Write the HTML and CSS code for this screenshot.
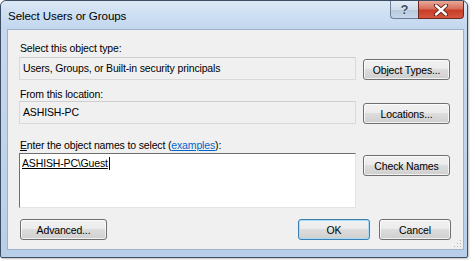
FILE: index.html
```html
<!DOCTYPE html>
<html>
<head>
<meta charset="utf-8">
<link rel="stylesheet" href="styles.css">
</head>
<body>
<div class="window">
  <div class="titlebar">
    <span class="title">Select Users or Groups</span>
    <div class="caption">
      <div class="cap help">?</div>
      <div class="cap close">
        <svg width="16" height="12" viewBox="0 0 16 12">
          <path d="M3 1.5 L13 10.5 M13 1.5 L3 10.5" stroke="#5a1c14" stroke-width="4.2" stroke-linecap="round"/>
          <path d="M3 1.5 L13 10.5 M13 1.5 L3 10.5" stroke="#ffffff" stroke-width="2.4" stroke-linecap="round"/>
        </svg>
      </div>
    </div>
  </div>
  <div class="client">
    <div class="group g1">
      <div class="label">Select this object type:</div>
      <div class="row">
        <div class="field">Users, Groups, or Built-in security principals</div>
        <div class="btn side">Object Types...</div>
      </div>
    </div>
    <div class="group g2">
      <div class="label">From this location:</div>
      <div class="row">
        <div class="field">ASHISH-PC</div>
        <div class="btn side">Locations...</div>
      </div>
    </div>
    <div class="group g3">
      <div class="label"><u>E</u>nter the object names to select (<a class="link">examples</a>):</div>
      <div class="row">
        <div class="textarea"><span class="resolved">ASHISH-PC\Guest</span><span class="caret"></span></div>
        <div class="btn side">Check Names</div>
      </div>
    </div>
    <div class="bottom">
      <div class="btn adv">Advanced...</div>
      <div class="spacer"></div>
      <div class="btn ok">OK</div>
      <div class="btn cancel">Cancel</div>
    </div>
    <svg class="grip" width="9" height="9" viewBox="0 0 9 9">
      <rect x="7" y="1" width="1" height="1" fill="#b8b8b8"/>
      <rect x="4" y="4" width="1" height="1" fill="#b8b8b8"/>
      <rect x="7" y="4" width="1" height="1" fill="#b8b8b8"/>
      <rect x="1" y="7" width="1" height="1" fill="#b8b8b8"/>
      <rect x="4" y="7" width="1" height="1" fill="#b8b8b8"/>
      <rect x="7" y="7" width="1" height="1" fill="#b8b8b8"/>
    </svg>
  </div>
</div>
</body>
</html>
```
FILE: styles.css
```css
html, body {
  margin: 0;
  padding: 0;
  background: #ffffff;
}
body {
  font-family: "Liberation Sans", Arial, sans-serif;
  font-size: 10.5px;
  letter-spacing: -0.15px;
  color: #000;
  width: 475px;
  height: 261px;
  overflow: hidden;
}
.window {
  width: 466px;
  height: 256px;
  border: 1px solid #3d4e64;
  border-radius: 6px 6px 2px 2px;
  background: linear-gradient(180deg, #d6e4f4 0%, #c6d8ee 12%, #bfd3eb 60%, #b9cfe9 100%);
  display: flex;
  flex-direction: column;
  box-shadow: 1px 1px 2px rgba(0,0,0,0.25);
}
.titlebar {
  height: 28px;
  display: flex;
  justify-content: space-between;
  align-items: flex-start;
  background: linear-gradient(180deg, #dbe7f5 0%, #cddff2 50%, #c2d6ee 100%);
  border-radius: 6px 6px 0 0;
}
.title {
  font-size: 11.6px;
  letter-spacing: -0.1px;
  padding-left: 7px;
  line-height: 29px;
  color: #000;
}
.caption {
  display: flex;
  margin-right: 3px;
}
.cap {
  height: 18px;
  box-sizing: border-box;
  border: 1px solid #6d7f98;
  border-top: none;
  display: flex;
  align-items: center;
  justify-content: center;
}
.help {
  width: 28px;
  border-radius: 0 0 0 4px;
  border-right: none;
  background: linear-gradient(180deg, #e2ebf5 0%, #cfdbe9 50%, #b9c9dd 51%, #c7d6e8 100%);
  color: #3a4a60;
  font-size: 13px;
  font-weight: bold;
  text-shadow: 0 0 1px #fff, 0 0 1px #fff;
  line-height: 18px;
}
.close {
  width: 46px;
  border-radius: 0 0 4px 0;
  border-color: #6e2a22;
  background: linear-gradient(180deg, #e9a99b 0%, #d86e5b 45%, #c83e28 55%, #d5573e 100%);
}
.client {
  position: relative;
  margin: 0 3px 0 6px;
  height: 221px;
  box-sizing: border-box;
  border: 1px solid #9eb1c9;
  background: #f0f0f0;
  padding: 11px 12px 0 11px;
}
.group { display: flex; flex-direction: column; }
.label {
  line-height: 14px;
  height: 14px;
  white-space: nowrap;
  padding-left: 1px;
}
.g1 .label { margin-bottom: 2px; }
.g2 { margin-top: 7px; }
.g3 { margin-top: 14px; }
.g3 .label { margin-bottom: 1px; }
.row {
  display: flex;
  gap: 7px;
  align-items: flex-start;
}
.field {
  width: 337px;
  height: 23px;
  box-sizing: border-box;
  border: 1px solid #d9d9d9;
  border-top-color: #cfcfcf;
  background: #f0f0f0;
  padding-left: 3px;
  line-height: 21px;
  white-space: nowrap;
  color: #000;
}
.textarea {
  width: 337px;
  height: 55px;
  box-sizing: border-box;
  background: #fff;
  border-top: 1px solid #6f6f6f;
  border-left: 1px solid #6f6f6f;
  border-right: 1px solid #e3e3e3;
  border-bottom: 1px solid #e3e3e3;
  padding: 2px 0 0 2px;
  line-height: 14px;
  white-space: nowrap;
}
.resolved {
  text-decoration: underline;
}
.caret {
  display: inline-block;
  width: 1px;
  height: 13px;
  background: #000;
  vertical-align: -3px;
  margin-left: 1px;
}
.link {
  color: #0066cc;
  text-decoration: underline;
}
.btn {
  box-sizing: border-box;
  height: 21px;
  border: 1px solid #707070;
  border-radius: 3px;
  background: linear-gradient(180deg, #f2f2f2 0%, #ebebeb 49%, #dddddd 50%, #cfcfcf 100%);
  box-shadow: inset 0 0 0 1px rgba(255,255,255,0.7);
  display: flex;
  align-items: center;
  justify-content: center;
  white-space: nowrap;
}
.side {
  width: 87px;
  margin-top: 2px;
}
.bottom {
  display: flex;
  margin-top: 11px;
  padding-left: 1px;
}
.spacer { flex: 1; }
.adv { width: 87px; }
.ok {
  width: 72px;
  border-color: #3c7fb1;
  box-shadow: inset 0 0 0 1px #a6dcf8;
}
.cancel {
  width: 72px;
  margin-left: 9px;
}
.grip {
  position: absolute;
  right: 1px;
  bottom: 1px;
}
```
